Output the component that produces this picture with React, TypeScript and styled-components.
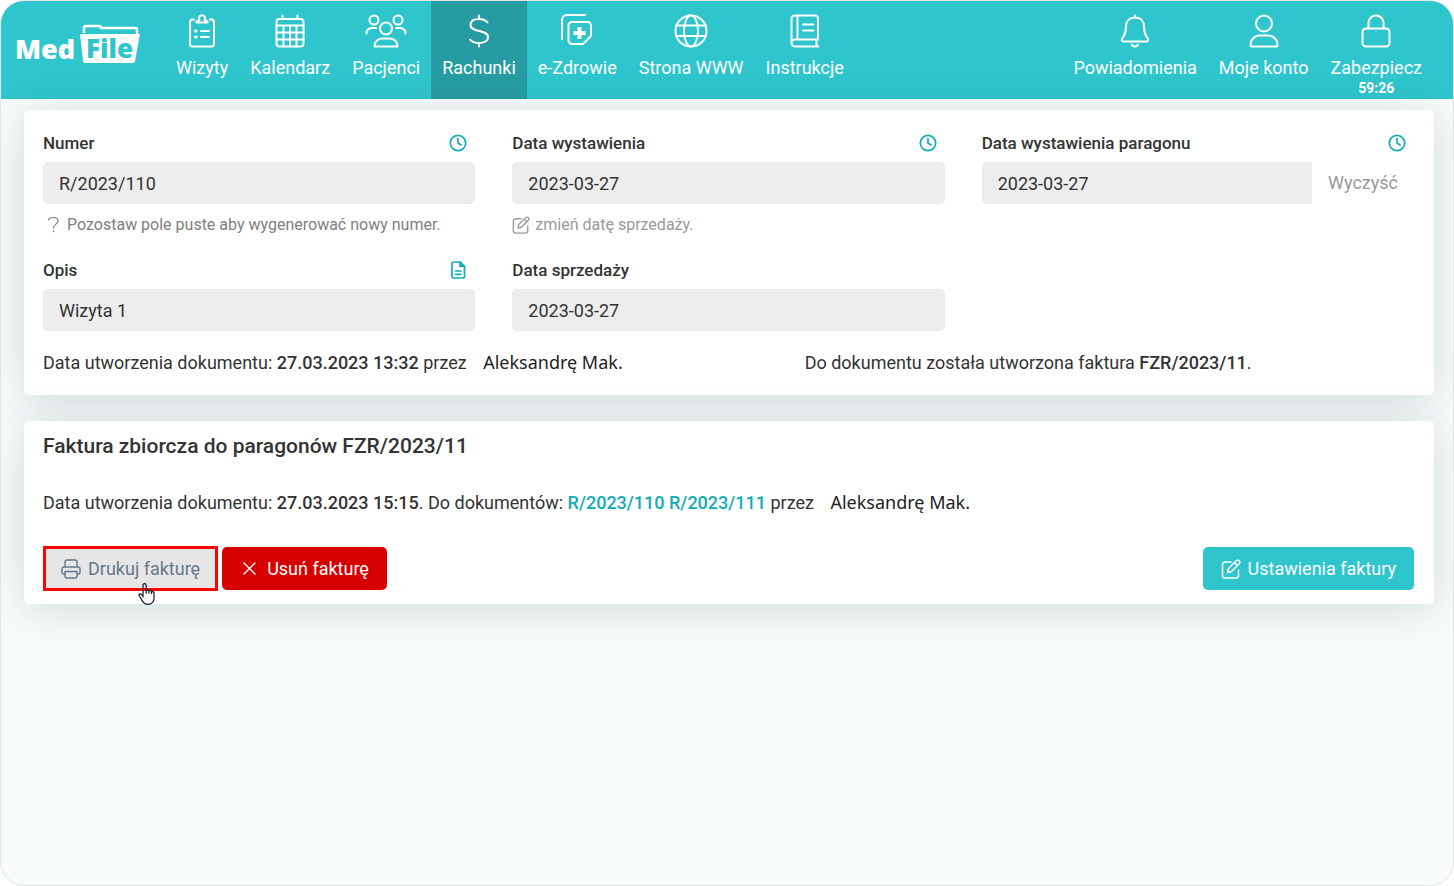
import React, { useId } from "react";
import styled, { createGlobalStyle } from "styled-components";

const teal = "#2fc5cd";
const accent = "#10adb8";

const GlobalStyle = createGlobalStyle`
  *, *::before, *::after { box-sizing: border-box; }
  body {
    margin: 0;
    background: #fff;
    font-family: Roboto, "Liberation Sans", sans-serif;
    font-size: 18px;
    line-height: 24px;
    color: #333;
  }
  button, input { font: inherit; color: inherit; }
`;

const Shell = styled.div`
  min-height: 100vh;
  display: flex;
  flex-direction: column;
  border: 1px solid #e2e4e5;
  border-radius: 24px;
  background: #f7fbfc;
  overflow: hidden;
`;

const TopBar = styled.header`
  display: flex;
  align-items: stretch;
  height: 98px;
  padding-right: 20px;
  background: ${teal};
  color: #fff;
`;

const Brand = styled.a`
  display: flex;
  width: 164px;
  padding: 22px 0 0 14px;
  color: #fff;
  text-decoration: none;
`;

const Nav = styled.nav`
  display: flex;
`;

const Account = styled(Nav)`
  margin-left: auto;
`;

const NavItem = styled.a<{ $active?: boolean }>`
  display: flex;
  flex-direction: column;
  align-items: center;
  padding: 12px 11px 0;
  background: ${(p) => (p.$active ? "#269ca2" : "transparent")};
  color: #fff;
  text-decoration: none;
  white-space: nowrap;

  svg {
    height: 36px;
    margin-bottom: 7px;
  }
`;

const Countdown = styled.strong`
  font-size: 14px;
  line-height: 16px;
`;

const Main = styled.main`
  display: flex;
  flex-direction: column;
  gap: 26px;
  padding: 11px 19px 26px 23px;
`;

const Card = styled.section<{ $compact?: boolean }>`
  padding: ${(p) => (p.$compact ? "12px 20px 13px 19px" : "20px 20px 20px 19px")};
  border-radius: 5px;
  background: #fff;
  box-shadow: 0 5px 40px rgba(40, 50, 50, 0.16);
`;

const FieldGrid = styled.div`
  display: grid;
  grid-template-columns: repeat(3, 1fr);
  column-gap: 37px;
  row-gap: 20px;
`;

const FieldBox = styled.div`
  display: flex;
  flex-direction: column;
`;

const LabelRow = styled.div`
  display: flex;
  align-items: center;
  justify-content: space-between;
  height: 26px;
  margin-bottom: 6px;
  padding-right: 8px;

  label {
    font-size: 17px;
    font-weight: 500;
  }
  svg { color: ${accent}; }
`;

const InputRow = styled.div`
  display: flex;
`;

const Input = styled.input<{ $joined?: boolean }>`
  flex: 1;
  min-width: 0;
  height: 42px;
  padding: 0 15px;
  border: 1px solid #eaebec;
  border-radius: ${(p) => (p.$joined ? "5px 0 0 5px" : "5px")};
  background: #ededed;
  outline: none;
`;

const ClearButton = styled.button`
  padding: 0 16px;
  border: 0;
  background: none;
  color: #999;
`;

const Hint = styled.p`
  display: flex;
  align-items: center;
  gap: 5px;
  margin: 9px 0 0;
  color: #808080;
  font-size: 16px;
`;

const HintLink = styled.a`
  display: flex;
  align-items: center;
  gap: 5px;
  margin-top: 9px;
  color: #999;
  font-size: 16px;
  text-decoration: none;
`;

const InfoRow = styled.div`
  display: grid;
  grid-template-columns: 5fr 4fr;
  margin-top: 20px;
`;

const Info = styled.p`
  margin: 0;

  b { font-weight: 500; }
`;

const Person = styled.span`
  margin-left: 12px;
  color: #222;
  font-family: "Noto Sans", "Open Sans", sans-serif;
  line-height: 1;
`;

const CardTitle = styled.h2`
  margin: 0 0 32px;
  font-size: 21px;
  font-weight: 500;
  line-height: 26px;
`;

const DocLink = styled.a`
  color: ${accent};
  font-weight: 500;
  text-decoration: none;
`;

const Actions = styled.div`
  display: flex;
  align-items: center;
  gap: 4px;
  margin-top: 31px;
`;

const Button = styled.button<{ $tone: "print" | "danger" | "primary" }>`
  position: relative;
  display: flex;
  align-items: center;
  gap: 7px;
  height: 43px;
  padding: 0 17px;
  border: 1px solid transparent;
  border-radius: 5px;
  color: #fff;
  white-space: nowrap;
  background: ${(p) => (p.$tone === "danger" ? "#d60000" : teal)};
  ${(p) =>
    p.$tone === "print" &&
    `height: 45px; padding: 0 15px; border: 3px solid #f00; border-radius: 0; background: #e6e6e6; color: #66788a;`}
  ${(p) => p.$tone === "primary" && `margin-left: auto;`}
`;

const Pointer = styled.svg`
  position: absolute;
  left: 92px;
  top: 33px;
`;

const line = { fill: "none", stroke: "currentColor", strokeLinecap: "round", strokeLinejoin: "round" } as const;

const NavIcon = ({ width = 36, children }: { width?: number; children: React.ReactNode }) => (
  <svg width={width} height="36" viewBox={`0 0 ${width} 36`} strokeWidth="2" aria-hidden="true" {...line}>
    {children}
  </svg>
);

const icons = {
  visits: (
    <NavIcon>
      <path d="M10 6.500H8.500A2.500 2.500 0 0 0 6 9v22a2.500 2.500 0 0 0 2.500 2.500h19A2.500 2.500 0 0 0 30 31V9a2.500 2.500 0 0 0-2.500-2.500H26" />
      <path d="M12.500 9.500V8.500L15.500 7a3 3 0 1 1 5 0l3 1.500v1z" />
      <path d="M17 18h8M17 24h8" />
      <path d="M11.500 18h.6M11.500 24h.6" strokeWidth="3" />
    </NavIcon>
  ),
  calendar: (
    <NavIcon>
      <rect x="4.500" y="6" width="27" height="27.500" rx="3" />
      <path d="M10.500 2.500V6M25.500 2.500V6M4.500 12.500h27M4.500 19.500h27M4.500 26.500h27M11.500 12.500v21M18 12.500v21M24.500 12.500v21" />
    </NavIcon>
  ),
  patients: (
    <NavIcon width={42}>
      <circle cx="9" cy="7" r="4.500" />
      <circle cx="33" cy="7" r="4.500" />
      <circle cx="21" cy="15.500" r="6" />
      <path d="M9.500 33.500h23c0-5-3.500-8-8-8h-7c-4.500 0-8 3-8 8zM1.500 20.500c0-3.500 2.500-5.500 6-5.500h3.500M40.500 20.500c0-3.500-2.500-5.500-6-5.500H31" />
    </NavIcon>
  ),
  bills: (
    <NavIcon>
      <path d="M18 2.500V6M18 30v3.500M26.500 9.500C24.500 7 21.500 6 18 6c-5 0-8.500 2-8.500 6 0 8 17.500 4 17.500 12 0 4-4 6-9 6-4 0-7-1-9-3.500" />
    </NavIcon>
  ),
  health: (
    <NavIcon>
      <path d="M3 26V7a5 5 0 0 1 5-5h18" />
      <path d="M13 9h15.500a3.500 3.500 0 0 1 3.500 3.500V23l-8 8H13a3.500 3.500 0 0 1-3.500-3.500v-15A3.500 3.500 0 0 1 13 9z" />
      <path d="M20.500 14v12M14.500 20h12" strokeWidth="4" strokeLinecap="butt" />
    </NavIcon>
  ),
  web: (
    <NavIcon>
      <circle cx="18" cy="18" r="15.500" />
      <ellipse cx="18" cy="18" rx="7" ry="15.500" />
      <path d="M3.500 12.500h29M3.500 23h29" />
    </NavIcon>
  ),
  manual: (
    <NavIcon>
      <path d="M31 26.500V5a2.500 2.500 0 0 0-2.500-2.500H8A3.500 3.500 0 0 0 4.500 6v24A3.500 3.500 0 0 0 8 33.500h23.500M31 26.500H8A3.500 3.500 0 0 0 4.500 30M29.500 27v6M10.500 2.500v24M16 11.500h10.500M16 17.500h10.500" />
    </NavIcon>
  ),
  bell: (
    <NavIcon>
      <path d="M18 2.500v2M18 4.500c-6 0-9 4-9 9 0 8-2 9-4 12.500-.8 1.500 0 2.500 1.500 2.500h23c1.500 0 2.300-1 1.500-2.500-2-3.500-4-4.500-4-12.500 0-5-3-9-9-9zM15 31.500c.5 2.600 5.500 2.600 6 0" />
    </NavIcon>
  ),
  account: (
    <NavIcon>
      <circle cx="18" cy="10.500" r="8" />
      <path d="M6 33.500h24c1 0 1.500-.6 1.500-1.500 0-5.500-4-9.500-9.500-9.500h-8c-5.500 0-9.500 4-9.500 9.500 0 .9.500 1.500 1.500 1.500z" />
    </NavIcon>
  ),
  lock: (
    <NavIcon>
      <rect x="4.500" y="15.500" width="27" height="18" rx="3.500" />
      <path d="M10.500 15.500V10a7.500 7.500 0 0 1 15 0v5.500" />
    </NavIcon>
  ),
};

const ClockIcon = () => (
  <svg width="18" height="18" viewBox="0 0 18 18" strokeWidth="1.700" aria-hidden="true" {...line}>
    <circle cx="9" cy="9" r="7.700" />
    <path d="M9 4.500V9l3 2" />
  </svg>
);

const FileIcon = () => (
  <svg width="18" height="18" viewBox="0 0 18 18" strokeWidth="1.700" aria-hidden="true" {...line}>
    <path d="M3 2.500A1.500 1.500 0 0 1 4.500 1H11l4.500 4.500v10A1.500 1.500 0 0 1 14 17H4.500A1.500 1.500 0 0 1 3 15.500z" />
    <path d="M11 1v4.500h4.500z" fill="currentColor" />
    <path d="M6.500 10h5.500M6.500 13.300h5.500" />
  </svg>
);

const EditIcon = ({ size }: { size: number }) => (
  <svg width={size} height={size} viewBox="0 0 20 20" strokeWidth="1.500" aria-hidden="true" {...line}>
    <path d="M10 3H4a2.500 2.500 0 0 0-2.500 2.500v11A2.500 2.500 0 0 0 4 19h11a2.500 2.500 0 0 0 2.500-2.500V11" />
    <path d="M6.500 13.500l1-4 7.700-7.700a1.900 1.900 0 0 1 3 3L10.500 12.500zM13.500 3.500l3 3" />
  </svg>
);

const QuestionIcon = () => (
  <svg width="19" height="18" viewBox="0 0 19 18" strokeWidth="1.200" aria-hidden="true" {...line}>
    <path d="M5.500 4c.5-2 2.200-2.500 4.500-2.500S15 2.500 15 5c0 3-4.500 3.300-4.500 7" />
    <path d="M10.500 15.200v.2" strokeWidth="1.600" />
  </svg>
);

const PrinterIcon = () => (
  <svg width="20" height="20" viewBox="0 0 20 20" strokeWidth="1.400" aria-hidden="true" {...line}>
    <path d="M4 8V3a2 2 0 0 1 2-2h8a2 2 0 0 1 2 2v5M4 15H2.500A1.500 1.500 0 0 1 1 13.500V10a2 2 0 0 1 2-2h14a2 2 0 0 1 2 2v3.500a1.500 1.500 0 0 1-1.500 1.500H16" />
    <path d="M4 12.500h12V17a2 2 0 0 1-2 2H6a2 2 0 0 1-2-2z" />
  </svg>
);

const CloseIcon = () => (
  <svg width="20" height="20" viewBox="0 0 20 20" strokeWidth="1.400" aria-hidden="true" {...line}>
    <path d="M4 4l11 11M15 4L4 15" />
  </svg>
);

const HandPointer = () => (
  <Pointer width="18" height="24" viewBox="0 0 18 24" strokeWidth="1.300" color="#1d2233" aria-hidden="true" {...line}>
    <path d="M5 15V3.200a1.600 1.600 0 0 1 3.200 0V11M8.200 9c0-1.600 2.700-1.600 2.700 0v2M10.900 9.500c0-1.500 2.600-1.500 2.600 0v2M13.500 10.500c0-1.300 2.500-1.300 2.500.2V16c0 3.800-2.500 6.300-6 6.300-2.600 0-4.300-1-5.400-3L1.400 14c-1-1.700.7-2.700 2-1.600L5 14" />
  </Pointer>
);

const Logo = () => (
  <svg width="128" height="44" viewBox="0 0 128 44" role="img" aria-label="Med File">
    <path d="M69 10V5q0-2 2-2h13q2 0 2 2h34q2 0 2 2v4" fill="none" stroke="#fff" strokeWidth="2.500" />
    <path d="M65 11h60l-5 27q0 2-2 2H70q-2 0-2-2z" fill="#fff" />
    <text x="0" y="36" fill="#fff" fontFamily="Open Sans, sans-serif" fontSize="27" fontWeight="800">Med</text>
    <text x="71" y="35" fill={teal} fontFamily="Open Sans, sans-serif" fontSize="26" fontWeight="800">File</text>
  </svg>
);

type FieldProps = {
  label: string;
  value: string;
  icon?: React.ReactNode;
  action?: string;
  children?: React.ReactNode;
};

const Field = ({ label, value, icon, action, children }: FieldProps) => {
  const id = useId();
  return (
    <FieldBox>
      <LabelRow>
        <label htmlFor={id}>{label}</label>
        {icon}
      </LabelRow>
      <InputRow>
        <Input id={id} defaultValue={value} readOnly $joined={!!action} />
        {action && <ClearButton type="button">{action}</ClearButton>}
      </InputRow>
      {children}
    </FieldBox>
  );
};

export default function App() {
  return (
    <>
      <GlobalStyle />
      <Shell>
        <TopBar>
          <Brand href="#"><Logo /></Brand>
          <Nav>
            <NavItem href="#">{icons.visits}Wizyty</NavItem>
            <NavItem href="#">{icons.calendar}Kalendarz</NavItem>
            <NavItem href="#">{icons.patients}Pacjenci</NavItem>
            <NavItem href="#" $active>{icons.bills}Rachunki</NavItem>
            <NavItem href="#">{icons.health}e-Zdrowie</NavItem>
            <NavItem href="#">{icons.web}Strona WWW</NavItem>
            <NavItem href="#">{icons.manual}Instrukcje</NavItem>
          </Nav>
          <Account>
            <NavItem href="#">{icons.bell}Powiadomienia</NavItem>
            <NavItem href="#">{icons.account}Moje konto</NavItem>
            <NavItem href="#">{icons.lock}Zabezpiecz<Countdown>59:26</Countdown></NavItem>
          </Account>
        </TopBar>
        <Main>
          <Card>
            <FieldGrid>
              <Field label="Numer" value="R/2023/110" icon={<ClockIcon />}>
                <Hint><QuestionIcon />Pozostaw pole puste aby wygenerować nowy numer.</Hint>
              </Field>
              <Field label="Data wystawienia" value="2023-03-27" icon={<ClockIcon />}>
                <HintLink href="#"><EditIcon size={18} />zmień datę sprzedaży.</HintLink>
              </Field>
              <Field label="Data wystawienia paragonu" value="2023-03-27" icon={<ClockIcon />} action="Wyczyść" />
              <Field label="Opis" value="Wizyta 1" icon={<FileIcon />} />
              <Field label="Data sprzedaży" value="2023-03-27" />
            </FieldGrid>
            <InfoRow>
              <Info>Data utworzenia dokumentu: <b>27.03.2023 13:32</b> przez <Person>Aleksandrę Mak.</Person></Info>
              <Info>Do dokumentu została utworzona faktura <b>FZR/2023/11</b>.</Info>
            </InfoRow>
          </Card>
          <Card $compact>
            <CardTitle>Faktura zbiorcza do paragonów FZR/2023/11</CardTitle>
            <Info>
              Data utworzenia dokumentu: <b>27.03.2023 15:15</b>. Do dokumentów:{" "}
              <DocLink href="#">R/2023/110</DocLink> <DocLink href="#">R/2023/111</DocLink> przez{" "}
              <Person>Aleksandrę Mak.</Person>
            </Info>
            <Actions>
              <Button type="button" $tone="print">
                <PrinterIcon />Drukuj fakturę
                <HandPointer />
              </Button>
              <Button type="button" $tone="danger"><CloseIcon />Usuń fakturę</Button>
              <Button type="button" $tone="primary"><EditIcon size={20} />Ustawienia faktury</Button>
            </Actions>
          </Card>
        </Main>
      </Shell>
    </>
  );
}
